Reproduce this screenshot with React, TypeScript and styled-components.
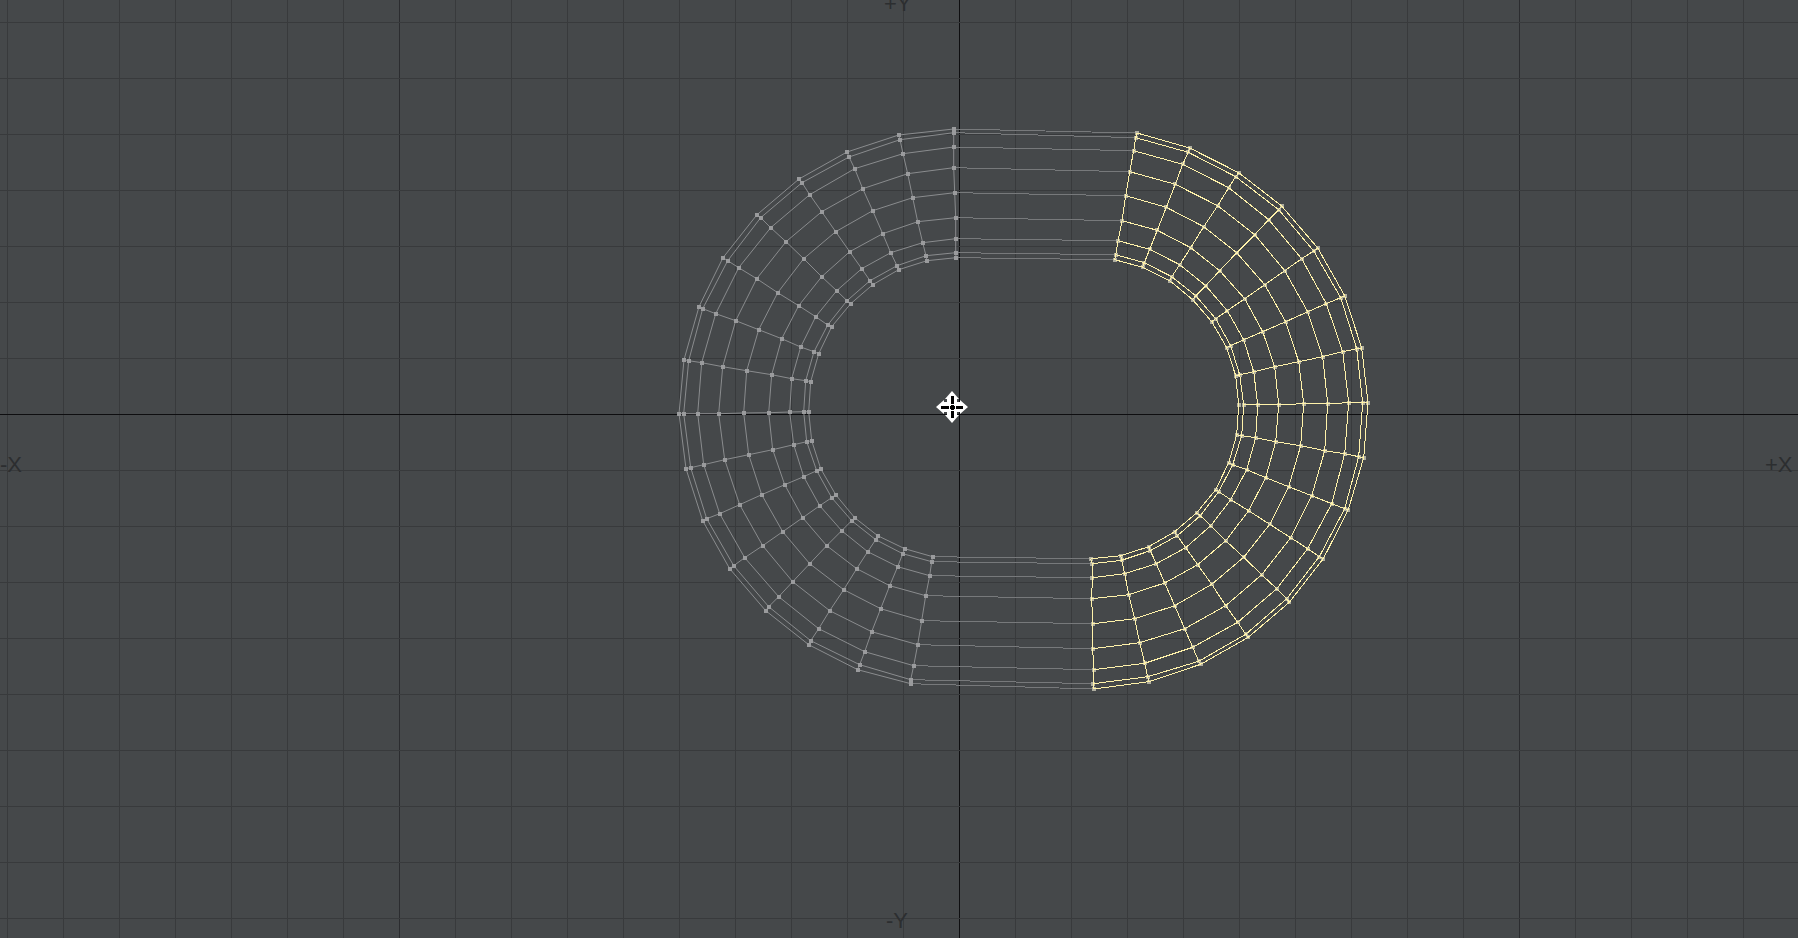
import React from 'react';
import styled, { createGlobalStyle } from 'styled-components';

const WIDTH = 1798;
const HEIGHT = 938;
const ORIGIN_X = 959;
const ORIGIN_Y = 414;
const GRID_STEP = 56;

type Point = [number, number];

// spokes were measured on 3x crops of the view, outer ring first
const fromCrop = (left: number, top: number, spokes: number[][]): Point[][] =>
    spokes.map(spoke => {
        const points: Point[] = [];
        for (let i = 0; i < spoke.length; i += 2) {
            points.push([left + spoke[i] / 3, top + spoke[i + 1] / 3]);
        }
        return points;
    });

const leftSpokes = [
    ...fromCrop(660, 110, [
        [881, 57, 881, 68, 881, 111, 881, 173, 884, 248, 887, 323, 887, 386, 887, 428, 888, 443],
        [716, 75, 720, 89, 729, 131, 743, 191, 758, 263, 773, 335, 788, 398, 798, 437, 801, 452],
        [561, 126, 567, 141, 584, 176, 608, 236, 638, 302, 668, 371, 692, 428, 711, 467, 716, 479],
        [417, 207, 426, 218, 449, 254, 485, 305, 527, 365, 569, 425, 605, 476, 630, 512, 638, 524],
        [291, 314, 302, 323, 332, 353, 378, 395, 431, 446, 485, 500, 530, 542, 561, 572, 572, 581],
        [189, 443, 203, 452, 236, 473, 290, 506, 353, 548, 416, 587, 467, 620, 503, 645, 515, 650],
        [117, 590, 128, 596, 167, 611, 227, 632, 296, 659, 365, 686, 422, 711, 462, 725, 476, 731],
        [72, 749, 86, 752, 125, 758, 188, 770, 260, 782, 335, 794, 395, 806, 437, 812, 452, 815],
        [57, 911, 71, 911, 113, 911, 176, 911, 251, 909, 326, 908, 389, 906, 431, 905, 446, 905],
    ]),
    ...fromCrop(660, 400, [
        [78, 206, 92, 203, 131, 194, 194, 179, 266, 164, 338, 149, 401, 134, 440, 125, 455, 122],
        [128, 362, 140, 356, 179, 341, 239, 314, 305, 284, 374, 254, 431, 230, 470, 212, 482, 206],
        [209, 506, 221, 497, 254, 473, 308, 437, 368, 395, 428, 353, 479, 317, 515, 293, 527, 284],
        [317, 632, 326, 620, 356, 590, 398, 545, 449, 491, 500, 437, 545, 392, 575, 362, 584, 353],
        [446, 734, 452, 722, 476, 686, 509, 632, 551, 569, 590, 506, 623, 455, 647, 419, 653, 407],
        [593, 809, 599, 794, 614, 755, 635, 695, 662, 626, 689, 557, 713, 500, 728, 461, 734, 446],
        [752, 851, 752, 839, 761, 797, 773, 734, 785, 662, 797, 587, 809, 527, 815, 485, 818, 470],
    ]),
];

const rightSpokes = [
    ...fromCrop(1090, 120, [
        [141, 39, 137, 53, 131, 92, 119, 155, 107, 227, 96, 302, 84, 362, 77, 404, 74, 419],
        [299, 84, 295, 97, 278, 133, 256, 193, 229, 262, 202, 331, 179, 388, 163, 428, 158, 442],
        [446, 158, 437, 170, 416, 203, 383, 257, 341, 320, 302, 383, 269, 434, 245, 470, 239, 482],
        [575, 258, 566, 269, 536, 299, 494, 344, 440, 398, 389, 452, 347, 497, 317, 527, 308, 539],
        [683, 384, 671, 393, 635, 416, 584, 452, 524, 494, 464, 536, 412, 572, 377, 596, 365, 605],
        [764, 527, 752, 533, 709, 551, 653, 575, 587, 605, 518, 635, 461, 659, 422, 677, 410, 683],
        [815, 684, 800, 686, 758, 695, 698, 710, 626, 725, 554, 740, 491, 755, 449, 764, 437, 767],
        [834, 848, 818, 848, 776, 848, 713, 851, 641, 851, 566, 854, 503, 854, 461, 855, 446, 855],
    ]),
    ...fromCrop(1060, 400, [
        [911, 173, 896, 170, 854, 161, 794, 152, 722, 137, 647, 125, 587, 113, 545, 107, 530, 104],
        [865, 329, 854, 326, 815, 311, 755, 287, 686, 260, 617, 233, 560, 209, 518, 194, 506, 188],
        [790, 476, 778, 470, 743, 446, 692, 413, 629, 373, 566, 332, 512, 299, 476, 275, 467, 269],
        [688, 607, 680, 596, 650, 566, 605, 524, 551, 472, 497, 422, 452, 377, 421, 347, 410, 338],
        [565, 712, 557, 703, 533, 667, 497, 617, 455, 553, 413, 494, 377, 443, 352, 407, 344, 395],
        [422, 793, 416, 784, 398, 742, 374, 686, 344, 617, 314, 549, 289, 491, 271, 452, 266, 440],
        [266, 845, 263, 830, 254, 790, 239, 728, 224, 656, 206, 584, 194, 521, 185, 481, 182, 467],
        [101, 867, 100, 851, 101, 809, 98, 746, 98, 671, 95, 596, 97, 533, 97, 491, 92, 476],
    ]),
];

const polyline = (points: Point[]) =>
    points.map(([x, y], i) => `${i === 0 ? 'M' : 'L'}${x.toFixed(1)} ${y.toFixed(1)}`).join('');

// spokes plus the rings that run across them
const meshPath = (spokes: Point[][]) => {
    const rings = spokes[0].map((_, ring) => spokes.map(spoke => spoke[ring]));
    return [...spokes, ...rings].map(polyline).join('');
};

const bridgePath = (from: Point[], to: Point[]) =>
    from.map((point, ring) => polyline([point, to[ring]])).join('');

const GlobalStyle = createGlobalStyle`
    html, body {
        margin: 0;
        padding: 0;
        background: #45484a;
        overflow: hidden;
    }
`;

const Viewport = styled.main`
    position: relative;
    width: ${WIDTH}px;
    height: ${HEIGHT}px;
    overflow: hidden;
    background: #45484a;
    font-family: "Liberation Sans", Arial, sans-serif;
`;

const Canvas = styled.svg`
    display: block;
`;

const GridLine = styled.line<{ $kind: 'minor' | 'major' | 'axis' }>`
    shape-rendering: crispEdges;
    stroke-width: 1;
    stroke: ${({ $kind }) => ({ minor: '#383a3c', major: '#2b2c2f', axis: '#0e0e10' }[$kind])};
`;

const Wire = styled.path<{ $selected?: boolean }>`
    fill: none;
    stroke-width: 1;
    stroke: ${({ $selected }) => ($selected ? '#fff2aa' : '#8a8c8e')};
    shape-rendering: ${({ $selected }) => ($selected ? 'crispEdges' : 'auto')};
`;

const Bridge = styled.path`
    fill: none;
    stroke-width: 1;
    stroke: #77797b;
    shape-rendering: crispEdges;
`;

const Vertex = styled.rect<{ $selected?: boolean }>`
    width: 4px;
    height: 4px;
    shape-rendering: crispEdges;
    fill: ${({ $selected }) => ($selected ? '#aeada0' : '#9a9b9d')};
`;

const AxisLabel = styled.span<{ $x: number; $y: number }>`
    position: absolute;
    left: ${({ $x }) => $x}px;
    top: ${({ $y }) => $y}px;
    font-size: 22px;
    line-height: 22px;
    color: #2c2e30;
    white-space: nowrap;
`;

const MoveCursor = styled.svg`
    position: absolute;
    left: 934px;
    top: 389px;
`;

const gridValues = (origin: number, size: number) => {
    const values: number[] = [];
    for (let v = origin % GRID_STEP; v < size; v += GRID_STEP) values.push(v);
    return values;
};

const lineKind = (value: number, origin: number) => {
    const steps = Math.round((value - origin) / GRID_STEP);
    if (steps === 0) return 'axis';
    return steps % 10 === 0 ? 'major' : 'minor';
};

const Grid = () => {
    const columns = gridValues(ORIGIN_X, WIDTH);
    const rows = gridValues(ORIGIN_Y, HEIGHT);
    return (
        <g>
            {columns.map(x => (
                <GridLine key={`c${x}`} $kind={lineKind(x, ORIGIN_X)} x1={x + 0.5} x2={x + 0.5} y1={0} y2={HEIGHT} />
            ))}
            {rows.map(y => (
                <GridLine key={`r${y}`} $kind={lineKind(y, ORIGIN_Y)} x1={0} x2={WIDTH} y1={y + 0.5} y2={y + 0.5} />
            ))}
        </g>
    );
};

const Vertices = ({ spokes, selected }: { spokes: Point[][]; selected?: boolean }) => (
    <g>
        {spokes.flat().map(([x, y], i) => (
            <Vertex key={i} $selected={selected} x={Math.round(x - 2)} y={Math.round(y - 2)} />
        ))}
    </g>
);

const Mesh = () => (
    <g>
        <Bridge d={bridgePath(leftSpokes[0], rightSpokes[0])} />
        <Bridge d={bridgePath(leftSpokes[leftSpokes.length - 1], rightSpokes[rightSpokes.length - 1])} />
        <Wire d={meshPath(leftSpokes)} />
        <Vertices spokes={leftSpokes} />
        <Vertices spokes={rightSpokes} selected />
        <Wire $selected d={meshPath(rightSpokes)} />
    </g>
);

const App = () => (
    <Viewport>
        <GlobalStyle />
        <Canvas width={WIDTH} height={HEIGHT} viewBox={`0 0 ${WIDTH} ${HEIGHT}`}>
            <Grid />
            <Mesh />
        </Canvas>
        <AxisLabel $x={884} $y={-7}>+Y</AxisLabel>
        <AxisLabel $x={886} $y={910}>-Y</AxisLabel>
        <AxisLabel $x={0} $y={454}>-X</AxisLabel>
        <AxisLabel $x={1765} $y={454}>+X</AxisLabel>
        <MoveCursor width={36} height={36} viewBox="-18 -18 36 36">
            <path
                fill="#fff"
                d="M0-16 7-8H5V-5H8V-7L16 0 8 7V5H5V8H7L0 16-7 8H-5V5H-8V7L-16 0-8-7V-5H-5V-8H-7Z"
            />
            <path stroke="#000" strokeWidth={3} shapeRendering="crispEdges" d="M0-11V11M-11 0H11" />
            <path stroke="#fff" strokeWidth={1} shapeRendering="crispEdges" d="M-3-3H3M-3 3H3M-3-3V3M3-3V3" />
        </MoveCursor>
    </Viewport>
);

export default App;
